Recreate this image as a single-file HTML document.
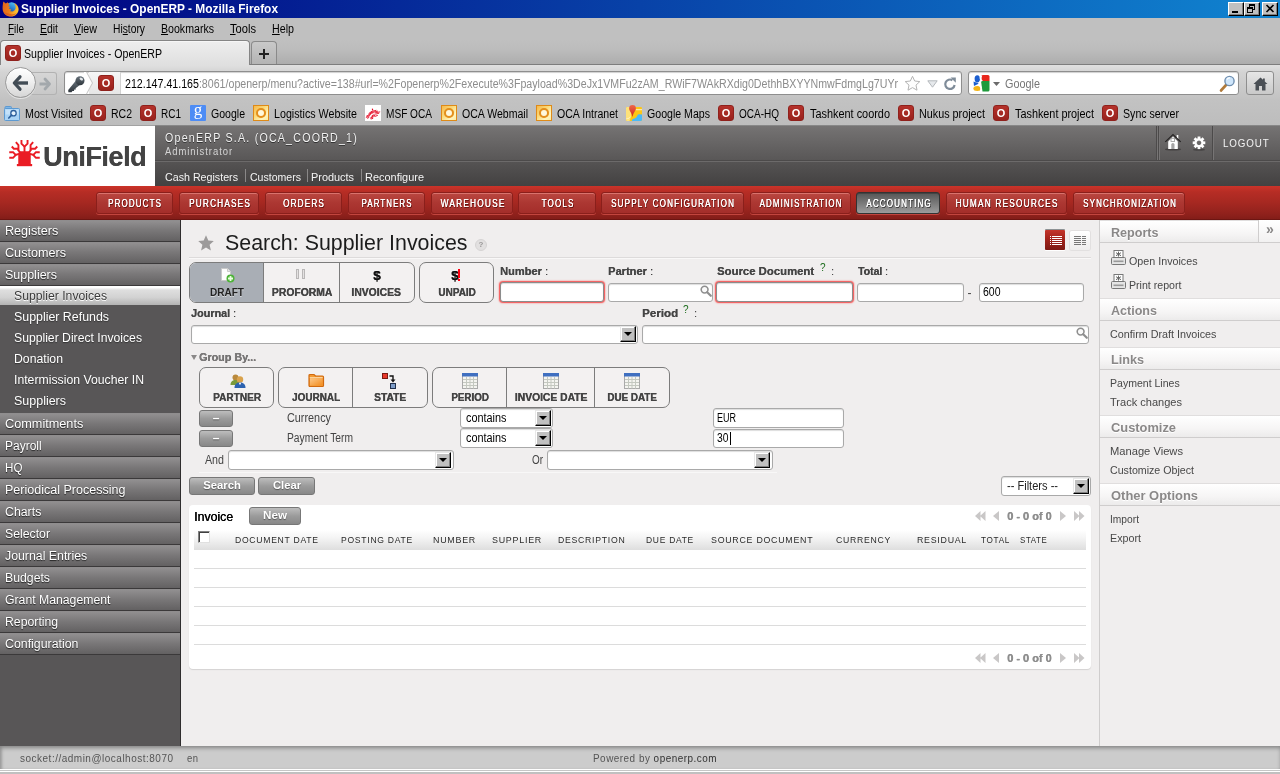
<!DOCTYPE html>
<html><head>
<meta charset="utf-8">
<title>Supplier Invoices - OpenERP</title>
<style>
html,body{margin:0;padding:0;}
body{will-change:transform;width:1280px;height:774px;overflow:hidden;position:relative;background:#c0c0c0;font-family:"Liberation Sans",sans-serif;font-size:12px;color:#000;}
body *{position:absolute;}
u,.s,style,head,title,script{position:static;}
div,span,a,i,b{box-sizing:border-box;white-space:nowrap;}
svg{display:block;overflow:visible;}
/* ---------- browser chrome ---------- */
#titlebar{left:0;top:0;width:1280px;height:18px;background:linear-gradient(to right,#000080 0%,#1084d0 100%);}
#titlebar .t{left:21px;top:2px;color:#fff;font-weight:bold;font-size:12.5px;line-height:15px;}
.wb{top:2px;width:16px;height:14px;background:#c0c0c0;border:1px solid;border-color:#fff #000 #000 #fff;box-shadow:inset -1px -1px 0 #808080;}
#menubar{left:0;top:18px;width:1280px;height:22px;background:#c0c0c0;}
#menubar span{top:4px;font-size:12px;line-height:14px;color:#000;}
#tabbar{left:0;top:40px;width:1280px;height:25px;background:linear-gradient(#c0c0c0 0,#bcbcbc 40%,#adadad 100%);border-bottom:1px solid #7d7d7d;}
#tab{left:0;top:0;width:250px;height:25px;background:linear-gradient(#eeeeee,#dfdfdf);border:1px solid #858585;border-bottom:none;border-radius:4px 4px 0 0;box-shadow:inset 0 1px 0 #f6f6f6;}
#newtab{left:251px;top:1px;width:26px;height:23px;background:linear-gradient(#c9c9c9,#b4b4b4);border:1px solid #8a8a8a;border-bottom:none;border-radius:4px 4px 0 0;}
#navbar{left:0;top:65px;width:1280px;height:35px;background:linear-gradient(#e0e0e0 0,#d4d4d4 20%,#c2c2c2 100%);}
.fav{width:16px;height:16px;border-radius:3px;background:linear-gradient(#b5322b,#98221d);border:1px solid #8f211c;}
.fav b{left:0;top:0;width:14px;height:14px;line-height:14px;text-align:center;color:#fff;font-size:11px;font-weight:bold;}
.olk{width:16px;height:16px;background:linear-gradient(135deg,#f6b84a 0,#fbd978 40%,#fff6c0 75%,#fdeaa0 100%);border:1px solid #de8a18;}
.olk b{left:1.500px;top:1.500px;width:10px;height:10px;border:2.500px solid #e38f1c;border-radius:50%;background:#fff8dc;box-shadow:0 0 1px #f8c66a;}
#urlbar{left:64px;top:71px;width:898px;height:24px;background:#fff;border:1px solid #8e8e8e;border-radius:3px;box-shadow:inset 0 1px 1px #d0d0d0;}
#searchbar{left:968px;top:71px;width:271px;height:24px;background:#fff;border:1px solid #8e8e8e;border-radius:3px;box-shadow:inset 0 1px 1px #d0d0d0;}
#homebtn{left:1246px;top:71px;width:28px;height:24px;background:linear-gradient(#e6e6e6,#c9c9c9);border:1px solid #8e8e8e;border-radius:3px;}
#bmbar{left:0;top:100px;width:1280px;height:25px;background:linear-gradient(#c2c2c2,#bdbdbd);}
#bmbar .bt{top:7px;font-size:12px;line-height:14px;color:#000;}
#bmbar .fav,#bmbar .olk,#bmbar .ic{top:5px;}
/* ---------- page ---------- */
#page{left:0;top:126px;width:1280px;height:646px;background:#f0eeee;overflow:hidden;}
#logo{left:0;top:0;width:155px;height:60px;background:#fff;}
#hdr{left:155px;top:0;width:1125px;height:60px;background:#4a4848;}
#hdr .up{left:0;top:0;width:1125px;height:35px;background:linear-gradient(#757373,#595757);border-bottom:1px solid #4c4a4a;}
#hdr .lo{left:0;top:35px;width:1125px;height:25px;background:linear-gradient(#555353,#434141);border-top:1px solid #6c6a6a;}
#hdr .co{left:10px;top:5px;font-size:12px;line-height:14px;color:#f2f2f2;letter-spacing:1.400px;text-shadow:0 1px 0 #333;}
#hdr .us{left:10px;top:20px;font-size:10px;line-height:12px;color:#d4d4d4;letter-spacing:1px;}
#hdr .sc{top:43.500px;font-size:11.500px;line-height:14px;color:#f4f4f4;}
#hdr .sp{top:43px;width:1px;height:13px;background:#8a8888;}
#hdr .vs{top:0;width:2px;height:34px;border-left:1px solid #4c4a4a;border-right:1px solid #777575;}
#red{left:0;top:60px;width:1280px;height:34px;background:linear-gradient(#cb3329 0,#b62d25 18%,#a62821 50%,#90211c 85%,#831d18 100%);border-bottom:1px solid #6d1512;}
.mb{top:6px;height:22px;border:1px solid #8a1f1b;border-radius:3px;background:linear-gradient(#bb4741,#ac3732 50%,#a42e2a);box-shadow:inset 0 1px 0 #d9736d,0 1px 0 #c2453e;color:#fff;font-size:10px;line-height:22px;letter-spacing:1.400px;text-shadow:.2px 0 0 #fff,1px 1px 0 #5a100d;text-align:center;}
.mb span{position:relative;margin-left:.6px;top:0;}
.mb.act{background:linear-gradient(#565656,#9c9c9c);border-color:#333;box-shadow:inset 0 1px 0 #444,0 1px 0 #c2453e;text-shadow:.2px 0 0 #fff,1px 1px 0 #333;}
#side{left:0;top:94px;width:180px;height:526px;background:#585657;}
#sidebr{left:180px;top:94px;width:1px;height:526px;background:#2f2d2e;}
.acc{left:0;width:180px;height:22px;background:linear-gradient(#918f90 0,#7a7879 45%,#636162 100%);border-top:1px solid #8f8d8e;border-bottom:1px solid #3b393a;color:#fff;font-size:12.500px;line-height:20px;text-shadow:0 1px 1px #222;}
.acc span{left:5px;top:0;}
.sub{left:14.400px;font-size:12px;line-height:16px;color:#fff;text-shadow:0 1px 1px #333;}
#subsel{left:0;top:66px;width:180px;height:19px;background:linear-gradient(#fff 0,#fff 8%,#dedede 22%,#d2d2d2 60%,#b3b3b3 100%);}
#main{left:181px;top:94px;width:918px;height:526px;background:#f0eeee;}
#rside{left:1099px;top:94px;width:181px;height:526px;background:#f0eeee;border-left:1px solid #cfcdcd;}
.sh{left:0;width:180px;height:23px;background:linear-gradient(#fff,#f6f5f5 60%,#ecebeb);border-top:1px solid #e0dede;border-bottom:1px solid #cfcdcd;}
.sh span{left:10.500px;top:3.500px;font-size:13px;line-height:16px;font-weight:bold;color:#8a8888;text-shadow:0 1px 0 #fff;}
.sl{left:9.500px;font-size:11.500px;line-height:14px;color:#484848;}
#foot{left:0;top:620px;width:1280px;height:23px;background:#cccccc;box-shadow:inset 0 3px 4px -1px #858585,inset 3px 0 3px -1px #a5a5a5;font-size:10px;color:#555;}
#foot span{top:7px;line-height:12px;letter-spacing:.5px;}
/* main content */
h1{margin:0;font-weight:normal;}
.lbl{font-size:11.500px;line-height:13px;font-weight:bold;color:#444;text-shadow:.3px 0 0 #555;}
.lbl i{font-style:normal;font-weight:normal;position:static;}
.inp{background:#fff;border:1px solid #a9a9a9;border-radius:3px;box-shadow:inset 0 1px 1px #ddd;}
.inp.red{border-color:#8c8c8c;box-shadow:0 0 1.500px 1px #f64545, inset 0 1px 1px #ddd;}
.inp span{left:4px;top:3px;font-size:12px;line-height:14px;color:#000;}
.dd{width:16px;height:16px;background:#c0c0c0;border:1px solid;border-color:#e8e8e8 #000 #000 #e8e8e8;box-shadow:inset -1px -1px 0 #808080,inset 1px 1px 0 #fff;}
.dd:after{content:"";position:absolute;left:3px;top:5px;border:4px solid transparent;border-top:4px solid #000;border-bottom:none;}
.fg{top:137px;height:41px;border:1px solid #7c7c7c;border-radius:7px;background:#f3f1f1;overflow:hidden;}
.fg .c{top:0;height:39px;}
.fg .c.sel{background:#a9aeb5;}
.fg .c+.c{border-left:1px solid #7c7c7c;}
.fl{top:23px;left:0;width:100%;text-align:center;font-size:11px;line-height:12px;font-weight:bold;color:#444;text-shadow:.35px 0 0 #444;}
.fl span{position:relative;}
.gbtn{background:linear-gradient(#bdbdbd,#9b9b9b 50%,#888);border:1px solid #777;border-radius:3px;color:#fff;font-weight:bold;font-size:12px;text-align:center;text-shadow:0 1px 1px #555;}
.gbtn span{position:relative;}
#list{left:8px;top:285px;width:902px;height:164px;background:#fff;border-radius:4px;box-shadow:0 1px 1px #d4d2d2;}
#lhead{left:5px;top:25px;width:892px;height:20px;background:linear-gradient(#fff 0,#f4f4f4 40%,#dedede 100%);}
#lhead span{top:4px;font-size:9.500px;line-height:11px;letter-spacing:.800px;color:#2a2a2a;}
.row{left:5px;width:892px;height:1px;background:#dcdcdc;}
.pg{font-size:11px;font-weight:bold;color:#8e8e8e;line-height:12px;text-shadow:.4px 0 0 #8e8e8e;}
</style>
</head>
<body class="abs">
<div id="titlebar" class="abs">
<svg style="left:2px;top:1px" width="17" height="16" viewBox="0 0 17 16"><defs><linearGradient id="fg1" x1="0" y1="0" x2="1" y2=".3"><stop offset="0" stop-color="#e0601a"></stop><stop offset=".55" stop-color="#ec7c1c"></stop><stop offset="1" stop-color="#fbc432"></stop></linearGradient><linearGradient id="fg2" x1=".7" y1="0" x2=".2" y2="1"><stop offset="0" stop-color="#56c4f2"></stop><stop offset=".5" stop-color="#2a7fd0"></stop><stop offset="1" stop-color="#153e96"></stop></linearGradient></defs><circle cx="9.500" cy="6.800" r="5.600" fill="url(#fg2)"></circle><path d="M1.300.600L3.800 2.600 5.800 1.200 7.200 3.400 6.300 5.200 8.200 5.800 6.800 7.600 9.200 8.600 8.200 10.200 10.800 10.400C12.500 10 14 8 13.600 5.500 13.400 4 12.800 3 12 2.200 14.800 2.800 16.800 5.500 16.600 8.500 16.400 12.500 13 15.600 9 15.600 4.500 15.600.800 12.500.600 8 .500 5 1 2.500 1.300.600Z" fill="url(#fg1)"></path><path d="M1.500 10.500C3 13.500 6 15 9 15 11.500 15 13.800 13.800 15.200 11.500 13.500 13 11 13.600 8.500 13 5.500 12.600 3 11.800 1.500 10.500Z" fill="#d9521a" opacity=".7"></path></svg>
<span class="t" style="display: inline-block; transform: scale(0.952, 1); transform-origin: 0px 50%;">Supplier Invoices - OpenERP - Mozilla Firefox</span>
<div class="wb abs" style="left:1228px"><i style="left:3px;top:8px;width:6px;height:2px;background:#000"></i></div>
<div class="wb abs" style="left:1244px"><i style="left:4px;top:1px;width:6px;height:6px;border:1px solid #000;border-top-width:2px"></i><i style="left:2px;top:4px;width:6px;height:6px;border:1px solid #000;border-top-width:2px;background:#c0c0c0"></i></div>
<div class="wb abs" style="left:1262px"><svg style="left:3px;top:2px" width="8" height="7" viewBox="0 0 8 7"><path d="M0.5 0L7.5 7M7.5 0L0.5 7" stroke="#000" stroke-width="1.6" fill="none"></path></svg></div>
</div>
<div id="menubar" class="abs">
<span style="left: 8px; display: inline-block; transform: scale(0.8265, 1); transform-origin: 0px 50%;"><u>F</u>ile</span>
<span style="left: 40px; display: inline-block; transform: scale(0.8694, 1); transform-origin: 0px 50%;"><u>E</u>dit</span>
<span style="left: 74px; display: inline-block; transform: scale(0.891, 1); transform-origin: 0px 50%;"><u>V</u>iew</span>
<span style="left: 113px; display: inline-block; transform: scale(0.8565, 1); transform-origin: 0px 50%;">Hi<u>s</u>tory</span>
<span style="left: 161px; display: inline-block; transform: scale(0.8829, 1); transform-origin: 0px 50%;"><u>B</u>ookmarks</span>
<span style="left: 230px; display: inline-block; transform: scale(0.9281, 1); transform-origin: 0px 50%;"><u>T</u>ools</span>
<span style="left: 272px; display: inline-block; transform: scale(0.8911, 1); transform-origin: 0px 50%;"><u>H</u>elp</span>
</div>
<div id="tabbar" class="abs">
<div id="tab" class="abs"><div class="fav abs" style="left:4px;top:4px"><b>O</b></div><span style="left: 23px; top: 6px; font-size: 12px; line-height: 14px; display: inline-block; transform: scale(0.8842, 1); transform-origin: 0px 50%;">Supplier Invoices - OpenERP</span></div>
<div id="newtab" class="abs"><i style="left:7px;top:11px;width:10px;height:2px;background:#222"></i><i style="left:11px;top:7px;width:2px;height:10px;background:#222"></i></div>
</div>
<div id="navbar" class="abs"></div>
<div id="fwdbtn" style="left:30px;top:71.500px;width:27px;height:23px;border:1px solid #b2b2b2;border-left:none;border-radius:0 3px 3px 0;background:linear-gradient(#d6d6d6,#c8c8c8)"><svg style="left:8px;top:4px" width="14" height="14" viewBox="0 0 14 14"><path d="M7 2L11.500 7 7 12" fill="none" stroke="#a3a8ac" stroke-width="2.800" stroke-linecap="round" stroke-linejoin="round"></path><path d="M1.500 7H10.500" stroke="#a3a8ac" stroke-width="3" stroke-linecap="butt"></path></svg></div>
<div id="backbtn" style="left:4.500px;top:67px;width:31px;height:31px;border-radius:50%;border:1px solid #9a9a9a;background:linear-gradient(#ffffff,#f0f0f0 45%,#d6d6d6);box-shadow:0 1px 0 #e4e4e4"><svg style="left:6px;top:7px" width="17" height="16" viewBox="0 0 17 16"><path d="M8 1.800L2.300 8 8 14.200" fill="none" stroke="#424c55" stroke-width="3.200" stroke-linecap="round" stroke-linejoin="round"></path><path d="M3 8H16" stroke="#424c55" stroke-width="3.400" stroke-linecap="butt"></path></svg></div>
<div id="urlbar">
<div style="left:24px;top:0;width:32px;height:22px;background:linear-gradient(#f6f6f6,#e6e6e6);border-right:1px solid #d2d2d2"></div>
<svg style="left:19px;top:0" width="10" height="22" viewBox="0 0 10 21" preserveAspectRatio="none"><path d="M0 0H2.500L8.500 10.500 2.500 21H0z" fill="#fff"></path><path d="M2.500 0L8.500 10.500 2.500 21" fill="none" stroke="#c9c9c9" stroke-width="1"></path></svg>
<svg style="left:2px;top:3px" width="18" height="18" viewBox="0 0 18 18"><defs><linearGradient id="kg" x1="0" y1="0" x2="0" y2="1"><stop offset="0" stop-color="#66717a"></stop><stop offset="1" stop-color="#2f363c"></stop></linearGradient></defs><path d="M9 5.500L13.200 9.800 8.600 13.200 8.800 14.600 7.200 14.600 7 16 5.400 15.900 4.600 17.200 1.400 17.200 1.200 15Z" fill="url(#kg)"></path><circle cx="13" cy="5.800" r="4.500" fill="url(#kg)"></circle><ellipse cx="14.300" cy="4" rx="1.900" ry="1.300" transform="rotate(35 14.300 4)" fill="#e4e8eb"></ellipse></svg>
<div class="fav" style="left:33px;top:3px;width:16px;height:16px"><b>O</b></div>
<span style="left: 60px; top: 5px; font-size: 12px; line-height: 14px; display: inline-block; transform: scale(0.886, 1); transform-origin: 0px 50%;">212.147.41.165<span style="color:#8c8c8c;position:static">:8061/openerp/menu?active=138#url=%2Fopenerp%2Fexecute%3Fpayload%3DeJx1VMFu2zAM_RWiF7WAkRXdig0DethhBXYYNmwFdmgLg7UYr</span></span>
<svg style="left:839px;top:3px" width="17" height="17" viewBox="0 0 17 17"><path d="M8.5 1.3l2.2 4.700 5.100.6-3.800 3.500 1 5.100-4.500-2.600-4.500 2.600 1-5.100-3.800-3.500 5.100-.6z" fill="#fdfdfd" stroke="#b4b4b4" stroke-width="1" stroke-linejoin="round"></path></svg>
<svg style="left:862px;top:8px" width="11" height="8" viewBox="0 0 11 8"><path d="M0.800.8h9.400L5.500 7.200z" fill="#e6e9ec" stroke="#b4b8bc" stroke-width="1"></path></svg>
<svg style="left:879px;top:5px" width="13" height="14" viewBox="0 0 13 14"><path d="M10.600 8A4.700 4.700 0 1 1 8.400 3.200" fill="none" stroke="#7f8c99" stroke-width="2.200"></path><path d="M6.600 .600h5.200v5.200z" fill="#7f8c99"></path></svg>
</div>
<div id="searchbar" class="abs">
<svg style="left:4px;top:3px" width="17" height="17" viewBox="0 0 17 17"><path d="M8.500 0H15a1.500 1.500 0 0 1 1.500 1.500V6H8.500z" fill="#e8261c"></path><path d="M8 6h8.500v9a1.500 1.500 0 0 1-1.500 1.500H9.500z" fill="#1f9a3c"></path><ellipse cx="4.300" cy="3.800" rx="2.700" ry="3.600" fill="#1c5fd0"></ellipse><path d="M0.500 6.500L6 8.500 1 11z" fill="#1c5fd0"></path><ellipse cx="4.300" cy="13.600" rx="3.900" ry="2.500" fill="#f5b516"></ellipse><path d="M7.300 0.500h2.200c-1.800 1.800-1.600 4 .4 5.300-2.400.8-3.400 2.400-2.300 4.400 1 1.600 1.500 3.400.6 6.300l-1.400-.4c.8-2 .4-3.600-.6-5-1.400-2-.4-4.500 1.600-5.500-1.400-1.300-1.600-3.500-.5-5.100z" fill="#fff"></path></svg>
<svg style="left:24px;top:10px" width="7" height="4" viewBox="0 0 7 4"><path d="M0 0h7L3.500 4z" fill="#6b6b6b"></path></svg>
<span style="left: 36px; top: 5px; font-size: 12px; line-height: 14px; color: rgb(119, 119, 119); display: inline-block; transform: scale(0.9043, 1); transform-origin: 0px 50%;">Google</span>
<svg style="left:250px;top:3px" width="17" height="17" viewBox="0 0 17 17"><path d="M2 15.500L7.500 9.500" stroke="#b07a3a" stroke-width="2.600" stroke-linecap="round"></path><circle cx="10.500" cy="6" r="4.600" fill="#cfe6fb" stroke="#6f8fb0" stroke-width="1.400"></circle><path d="M8 4.500a3 3 0 0 1 3-1.500" stroke="#fff" stroke-width="1.200" fill="none"></path></svg>
</div>
<div id="homebtn" class="abs"><svg style="left:6px;top:5px" width="15" height="14" viewBox="0 0 15 14"><path d="M7.500 0.500L0.500 7h2v6.500h3.500V9h3v4.500h3.500V7h2L11.800 4.500V1.500h-1.800v1.300z" fill="#4a4f55"></path></svg></div>
<div id="bmbar" class="abs">
<svg class="ic" style="left:4px" width="16" height="16" viewBox="0 0 16 16"><path d="M1 4V2.500A1 1 0 0 1 2 1.500H6.500A1 1 0 0 1 7.500 2.500V4z" fill="#7fb6e6" stroke="#5d9ad2" stroke-width="1"></path><rect x=".500" y="3.500" width="15" height="12" rx="1" fill="#a9d3f5" stroke="#5d9ad2" stroke-width="1"></rect><rect x="1.500" y="4.500" width="13" height="5" fill="#c4e2fa"></rect><circle cx="9.500" cy="8.200" r="2.700" fill="#e6f3fd" stroke="#2c5f9c" stroke-width="1.300"></circle><path d="M7.600 10.200L4.800 13" stroke="#2c5f9c" stroke-width="1.700" stroke-linecap="round"></path></svg>
<span class="bt" style="left: 25px; display: inline-block; transform: scale(0.8904, 1); transform-origin: 0px 50%;">Most Visited</span>
<div class="fav abs" style="left:90px"><b>O</b></div><span class="bt" style="left: 111px; display: inline-block; transform: scale(0.8744, 1); transform-origin: 0px 50%;">RC2</span>
<div class="fav abs" style="left:140px"><b>O</b></div><span class="bt" style="left: 161px; display: inline-block; transform: scale(0.8328, 1); transform-origin: 0px 50%;">RC1</span>
<div class="ic abs" style="left:190px;width:16px;height:16px;background:#4d8cf5;border-radius:1px"><b style="left:0;top:-3px;width:16px;text-align:center;color:#fff;font-family:'Liberation Serif',serif;font-size:17px;line-height:16px;font-weight:normal">g</b></div><span class="bt" style="left: 211px; display: inline-block; transform: scale(0.8785, 1); transform-origin: 0px 50%;">Google</span>
<div class="olk abs" style="left:253px"><b></b></div><span class="bt" style="left: 274px; display: inline-block; transform: scale(0.891, 1); transform-origin: 0px 50%;">Logistics Website</span>
<div class="ic abs" style="left:365px;width:16px;height:16px;background:#fff"><svg style="left:0;top:0" width="16" height="16" viewBox="0 0 16 16"><g stroke="#e3001b" stroke-linecap="round" fill="none" transform="translate(0 1.200) scale(1 .880)"><path d="M7.400 3.200L7.700 4.400" stroke-width="1.200"></path><path d="M6 6.200L11 4.700M4.600 7.500L12.600 5.700M10 7.600L14.800 6.500M10.600 9L13.800 8.100M3.600 8.900L8.200 7.500" stroke-width=".900"></path><path d="M1.600 11.200L5.800 9M1.200 12.700L4.800 10.700M7.200 10.600L9.200 9.700M6.600 12.100L9.600 10.600M9.800 11.600L12.400 10.600M5.400 13.500L8 12.400M2.400 13.600L3.800 12.900M6.200 14.500L7.800 13.900" stroke-width=".950"></path></g></svg></div><span class="bt" style="left: 386px; display: inline-block; transform: scale(0.8414, 1); transform-origin: 0px 50%;">MSF OCA</span>
<div class="olk abs" style="left:441px"><b></b></div><span class="bt" style="left: 462px; display: inline-block; transform: scale(0.8784, 1); transform-origin: 0px 50%;">OCA Webmail</span>
<div class="olk abs" style="left:536px"><b></b></div><span class="bt" style="left: 557px; display: inline-block; transform: scale(0.8793, 1); transform-origin: 0px 50%;">OCA Intranet</span>
<svg class="ic" style="left:626px" width="16" height="16" viewBox="0 0 16 16"><defs><linearGradient id="gm1" x1="0" y1="0" x2="0" y2="1"><stop offset="0" stop-color="#f0674a"></stop><stop offset="1" stop-color="#cf2a1c"></stop></linearGradient></defs><rect x="0" y="2" width="16" height="14" rx="1.200" fill="#fdc614"></rect><path d="M0 3.200A1.200 1.200 0 0 1 1.200 2H4.500Q6.500 9 3.500 16H1.200A1.200 1.200 0 0 1 0 14.800z" fill="#fde27a"></path><path d="M6 16C5.600 13.600 8 13.900 9.500 13 11.500 12 10.800 9.600 13 9.200L16 9.400V14.800A1.200 1.200 0 0 1 14.800 16z" fill="#4bbaf5"></path><rect x="9.500" y="4.200" width="6.500" height="1" fill="#fff3c8"></rect><path d="M.500 13.500Q3.500 14 4.600 11.500" stroke="#fff3c8" stroke-width=".8" fill="none"></path><path d="M6.500 0A3.400 3.400 0 0 1 9.900 3.400C9.900 5.600 7.200 7.500 6.700 11.600H6.300C5.800 7.500 3.100 5.600 3.100 3.400A3.400 3.400 0 0 1 6.500 0z" fill="url(#gm1)"></path></svg>
<span class="bt" style="left: 647px; display: inline-block; transform: scale(0.8827, 1); transform-origin: 0px 50%;">Google Maps</span>
<div class="fav abs" style="left:718px"><b>O</b></div><span class="bt" style="left: 739px; display: inline-block; transform: scale(0.8333, 1); transform-origin: 0px 50%;">OCA-HQ</span>
<div class="fav abs" style="left:788px"><b>O</b></div><span class="bt" style="left: 810px; display: inline-block; transform: scale(0.9084, 1); transform-origin: 0px 50%;">Tashkent coordo</span>
<div class="fav abs" style="left:898px"><b>O</b></div><span class="bt" style="left: 919px; display: inline-block; transform: scale(0.8995, 1); transform-origin: 0px 50%;">Nukus project</span>
<div class="fav abs" style="left:993px"><b>O</b></div><span class="bt" style="left: 1015px; display: inline-block; transform: scale(0.904, 1); transform-origin: 0px 50%;">Tashkent project</span>
<div class="fav abs" style="left:1102px"><b>O</b></div><span class="bt" style="left: 1123px; display: inline-block; transform: scale(0.8838, 1); transform-origin: 0px 50%;">Sync server</span>
</div>
<div style="left:0;top:125px;width:1280px;height:1px;background:linear-gradient(to right,#a2a2a2 155px,#878787 155px)"></div>
<div id="page" class="abs">
<div id="logo" class="abs">
<svg style="left:8px;top:13px" width="33" height="28" viewBox="0 0 32.5 28"><g fill="none" stroke="#ea1c24" stroke-width="1.900" stroke-linecap="butt" stroke-linejoin="miter"><path d="M12.2 13.8 L9.4 10.4"></path><path d="M10.2 11 V6 L7.6 3.2"></path><path d="M10.2 9.7 H5.6 L3.5 7.5"></path><path d="M10.8 14.8 L7 16"></path><path d="M7.6 16.2 L4.8 13.2 H1"></path><path d="M7.6 15.8 L4.8 18.8 H1"></path><path d="M16.25 7.6 L13.2 4.6 V1"></path><path d="M 20.3 13.8 L 23.1 10.4"></path><path d="M 22.3 11 V 6 L 24.9 3.2"></path><path d="M 22.3 9.7 H 26.9 L 29 7.5"></path><path d="M 21.7 14.8 L 25.5 16"></path><path d="M 24.9 16.2 L 27.7 13.2 H 31.5"></path><path d="M 24.9 15.8 L 27.7 18.8 H 31.5"></path><path d="M 16.25 7.6 L 19.3 4.6 V 1"></path><path d="M16.25 13 V7"></path></g><path d="M10 25.500V15.500Q10 12.400 13 12.300H19.500Q22.500 12.400 22.500 15.500V25.500Z" fill="#ea1c24"></path><path d="M8.600 25h15.300v2.200H8.600z" fill="#ea1c24"></path></svg>
<span style="left: 43px; top: 18px; font-size: 27px; line-height: 27px; font-weight: bold; color: rgb(67, 67, 67); letter-spacing: -0.5px; text-shadow: rgb(67, 67, 67) 0.3px 0px 0px; display: inline-block; transform: scale(1.0049, 1); transform-origin: 0px 50%;">UniField</span>
</div>
<div id="hdr" class="abs">
<div class="up"></div><div class="lo"></div>
<span class="co" style="display: inline-block; transform: scale(0.8843, 1); transform-origin: 0px 50%;">OpenERP S.A. (OCA_COORD_1)</span>
<span class="us" style="display: inline-block; transform: scale(0.9457, 1); transform-origin: 0px 50%;">Administrator</span>
<span class="sc" style="left: 10px; display: inline-block; transform: scale(0.9285, 1); transform-origin: 0px 50%;">Cash Registers</span><i class="sp" style="left:90px"></i>
<span class="sc" style="left: 95px; display: inline-block; transform: scale(0.9171, 1); transform-origin: 0px 50%;">Customers</span><i class="sp" style="left:152px"></i>
<span class="sc" style="left: 156px; display: inline-block; transform: scale(0.9473, 1); transform-origin: 0px 50%;">Products</span><i class="sp" style="left:206px"></i>
<span class="sc" style="left: 210px; display: inline-block; transform: scale(0.9514, 1); transform-origin: 0px 50%;">Reconfigure</span>
<i class="vs" style="left:1001px"></i><i class="vs" style="left:1003px"></i><i class="vs" style="left:1057px"></i>
<svg style="left:1009px;top:7px" width="18" height="18" viewBox="0 0 18 18"><ellipse cx="9" cy="16.400" rx="8" ry="1.100" fill="#2e2c2c" opacity=".6"></ellipse><path d="M4.200 8.500L9 3.400 13.800 8.500V16H4.200Z" fill="#fff"></path><rect x="12.700" y="2" width="1.600" height="4" fill="#fff"></rect><path d="M1.300 8.900L9 1.500 16.700 8.900" fill="none" stroke="#262424" stroke-width="1.250"></path><rect x="7" y="5.300" width="3.600" height="3.200" fill="#fff" stroke="#999" stroke-width=".8"></rect><path d="M7.300 16V11.500a1.600 1.600 0 0 1 3.200 0V16z" fill="#a5a5a5"></path></svg>
<svg style="left:1037px;top:10px" width="14" height="15" viewBox="0 0 14 15"><ellipse cx="7" cy="13.800" rx="6" ry="1" fill="#2e2c2c" opacity=".5"></ellipse><g transform="translate(7 6.800)"><g fill="#fff"><rect x="-1.400" y="-6.300" width="2.800" height="12.600"></rect><rect x="-1.400" y="-6.300" width="2.800" height="12.600" transform="rotate(45)"></rect><rect x="-1.400" y="-6.300" width="2.800" height="12.600" transform="rotate(90)"></rect><rect x="-1.400" y="-6.300" width="2.800" height="12.600" transform="rotate(135)"></rect><circle r="4.500"></circle></g><circle r="1.900" fill="#6a6868" stroke="#4a4848" stroke-width=".6"></circle></g></svg>
<span style="left: 1068px; top: 10px; font-size: 11.5px; line-height: 14px; color: rgb(244, 244, 244); letter-spacing: 1px; display: inline-block; transform: scale(0.8522, 1); transform-origin: 0px 50%;">LOGOUT</span>
</div>
<div id="red" class="abs">
<div class="mb" style="left:96px;width:77px"><span style="display: inline-block; transform: translateX(-50%) scale(0.802, 1); position: absolute; left: 50%; transform-origin: 50% 50%;">PRODUCTS</span></div>
<div class="mb" style="left:179px;width:80px"><span style="display: inline-block; transform: translateX(-50%) scale(0.8284, 1); position: absolute; left: 50%; transform-origin: 50% 50%;">PURCHASES</span></div>
<div class="mb" style="left:265px;width:77px"><span style="display: inline-block; transform: translateX(-50%) scale(0.8205, 1); position: absolute; left: 50%; transform-origin: 50% 50%;">ORDERS</span></div>
<div class="mb" style="left:348px;width:77px"><span style="display: inline-block; transform: translateX(-50%) scale(0.7878, 1); position: absolute; left: 50%; transform-origin: 50% 50%;">PARTNERS</span></div>
<div class="mb" style="left:431px;width:82px"><span style="display: inline-block; transform: translateX(-50%) scale(0.8355, 1); position: absolute; left: 50%; transform-origin: 50% 50%;">WAREHOUSE</span></div>
<div class="mb" style="left:518px;width:78px"><span style="display: inline-block; transform: translateX(-50%) scale(0.8104, 1); position: absolute; left: 50%; transform-origin: 50% 50%;">TOOLS</span></div>
<div class="mb" style="left:601px;width:143px"><span style="display: inline-block; transform: translateX(-50%) scale(0.8133, 1); position: absolute; left: 50%; transform-origin: 50% 50%;">SUPPLY CONFIGURATION</span></div>
<div class="mb" style="left:750px;width:101px"><span style="display: inline-block; transform: translateX(-50%) scale(0.7949, 1); position: absolute; left: 50%; transform-origin: 50% 50%;">ADMINISTRATION</span></div>
<div class="mb act" style="left:856px;width:84px"><span style="display: inline-block; transform: translateX(-50%) scale(0.8063, 1); position: absolute; left: 50%; transform-origin: 50% 50%;">ACCOUNTING</span></div>
<div class="mb" style="left:946px;width:121px"><span style="display: inline-block; transform: translateX(-50%) scale(0.832, 1); position: absolute; left: 50%; transform-origin: 50% 50%;">HUMAN RESOURCES</span></div>
<div class="mb" style="left:1073px;width:112px"><span style="display: inline-block; transform: translateX(-50%) scale(0.8038, 1); position: absolute; left: 50%; transform-origin: 50% 50%;">SYNCHRONIZATION</span></div>
</div>
<div id="side" class="abs">
<div class="acc" style="top:0"><span style="display: inline-block; transform: scale(1.0076, 1); transform-origin: 0px 50%;">Registers</span></div>
<div class="acc" style="top:22px"><span style="display: inline-block; transform: scale(1.0093, 1); transform-origin: 0px 50%;">Customers</span></div>
<div class="acc" style="top:44px"><span style="display: inline-block; transform: scale(0.9976, 1); transform-origin: 0px 50%;">Suppliers</span></div>
<div id="subsel"></div>
<span class="sub" style="top: 68px; color: rgb(58, 58, 58); text-shadow: rgb(255, 255, 255) 0px 1px 0px; display: inline-block; transform: scale(1.0176, 1); transform-origin: 0px 50%;">Supplier Invoices</span>
<span class="sub" style="top: 89px; display: inline-block; transform: scale(1.0319, 1); transform-origin: 0px 50%;">Supplier Refunds</span>
<span class="sub" style="top: 110px; display: inline-block; transform: scale(1.0154, 1); transform-origin: 0px 50%;">Supplier Direct Invoices</span>
<span class="sub" style="top: 131px; display: inline-block; transform: scale(1.0198, 1); transform-origin: 0px 50%;">Donation</span>
<span class="sub" style="top: 152px; display: inline-block; transform: scale(1.0205, 1); transform-origin: 0px 50%;">Intermission Voucher IN</span>
<span class="sub" style="top: 173px; display: inline-block; transform: scale(1.0394, 1); transform-origin: 0px 50%;">Suppliers</span>
<div class="acc" style="top:193px"><span style="display: inline-block; transform: scale(1.0156, 1); transform-origin: 0px 50%;">Commitments</span></div>
<div class="acc" style="top:215px"><span style="display: inline-block; transform: scale(0.9603, 1); transform-origin: 0px 50%;">Payroll</span></div>
<div class="acc" style="top:237px"><span style="display: inline-block; transform: scale(0.928, 1); transform-origin: 0px 50%;">HQ</span></div>
<div class="acc" style="top:259px"><span style="display: inline-block; transform: scale(1.0016, 1); transform-origin: 0px 50%;">Periodical Processing</span></div>
<div class="acc" style="top:281px"><span style="display: inline-block; transform: scale(0.9857, 1); transform-origin: 0px 50%;">Charts</span></div>
<div class="acc" style="top:303px"><span style="display: inline-block; transform: scale(0.9813, 1); transform-origin: 0px 50%;">Selector</span></div>
<div class="acc" style="top:325px"><span style="display: inline-block; transform: scale(0.9859, 1); transform-origin: 0px 50%;">Journal Entries</span></div>
<div class="acc" style="top:347px"><span style="display: inline-block; transform: scale(0.9809, 1); transform-origin: 0px 50%;">Budgets</span></div>
<div class="acc" style="top:369px"><span style="display: inline-block; transform: scale(0.9786, 1); transform-origin: 0px 50%;">Grant Management</span></div>
<div class="acc" style="top:391px"><span style="display: inline-block; transform: scale(0.9815, 1); transform-origin: 0px 50%;">Reporting</span></div>
<div class="acc" style="top:413px"><span style="display: inline-block; transform: scale(0.9884, 1); transform-origin: 0px 50%;">Configuration</span></div>
</div>
<div id="sidebr"></div>
<div id="main" class="abs">
<svg style="left:17px;top:15px" width="16" height="16" viewBox="0 0 16 16"><path d="M8 0.300l2.300 5.300 5.500.5-4.200 3.700 1.300 5.600L8 12.400 3.100 15.400l1.300-5.600L.2 6.100l5.500-.5z" fill="#9c9a9a"></path></svg>
<h1 style="left: 44px; top: 11px; font-size: 22px; line-height: 24px; color: rgb(28, 28, 28); display: inline-block; transform: scale(0.9721, 1); transform-origin: 0px 50%;">Search: Supplier Invoices</h1>
<div style="left:294px;top:19px;width:12px;height:12px;border-radius:50%;background:#e2e0e0;border:1px solid #d6d4d4"><span style="left:2.500px;top:0;font-size:8px;line-height:10px;font-weight:bold;color:#9a9898">?</span></div>
<div style="left:864px;top:10px;width:20px;height:20px;border-radius:1px;background:linear-gradient(#c4352a,#a3231b 45%,#7c1913);box-shadow:0 -1px 0 #8d9294,0 1px 0 #fff"><i style="left:5px;top:6px;width:1px;height:1px;background:#fff;box-shadow:0 2px 0 #fff,0 4px 0 #fff,0 6px 0 #fff,0 8px 0 #fff"></i><i style="left:7px;top:6px;width:10px;height:1px;background:#fff;box-shadow:0 2px 0 #fff,0 4px 0 #fff,0 6px 0 #fff,0 8px 0 #fff"></i></div>
<div style="left:889px;top:11px;width:20px;height:19px;border-radius:2px;background:linear-gradient(#fff,#eeeded);box-shadow:0 0 0 1px #e2e0e0"><i style="left:4px;top:5px;width:7px;height:1px;background:#777;box-shadow:0 2px 0 #777,0 4px 0 #777,0 6px 0 #777,0 8px 0 #777"></i><i style="left:12px;top:5px;width:4px;height:1px;background:#777;box-shadow:0 2px 0 #777,0 4px 0 #777,0 6px 0 #777,0 8px 0 #777"></i></div>
<div style="left:8px;top:37px;width:902px;height:1px;background:#dddbdb"></div><div style="left:8px;top:38px;width:902px;height:1px;background:#f9f8f8"></div>
<div class="fg" style="left:8px;top:42px;width:226px">
<div class="c sel" style="left:0;width:73px"><svg style="left:30px;top:5px" width="15" height="15" viewBox="0 0 15 15"><path d="M1.500.500h6l3 3v9h-9z" fill="#fdfdfd" stroke="#c9c9c9" stroke-width="1"></path><path d="M7.500.500v3h3" fill="#e8e8e8" stroke="#c9c9c9" stroke-width="1"></path><circle cx="10.500" cy="10.500" r="4" fill="#4fb33a"></circle><path d="M10.500 8v5M8 10.500h5" stroke="#eaffdf" stroke-width="1.800"></path></svg><div class="fl" style="color:#222;text-shadow:0 1px 0 #d8dadd"><span style="display: inline-block; transform: translateX(-50%) scale(0.912, 1); position: absolute; left: 50%; transform-origin: 50% 50%;">DRAFT</span></div></div>
<div class="c" style="left:73px;width:76px"><i style="left:32px;top:6px;width:3px;height:10px;background:#e4e2e2;border:1px solid #b9b7b7"></i><i style="left:38px;top:6px;width:3px;height:10px;background:#e4e2e2;border:1px solid #b9b7b7"></i><div class="fl"><span style="display: inline-block; transform: translateX(-50%) scale(0.9428, 1); position: absolute; left: 50%; transform-origin: 50% 50%;">PROFORMA</span></div></div>
<div class="c" style="left:149px;width:75px"><span style="left: 33px; top: 4.5px; font-size: 13px; line-height: 15px; font-weight: bold; color: rgb(17, 17, 17); text-shadow: rgb(17, 17, 17) 0.4px 0px 0px; display: inline-block; transform: scale(1.0367, 1); transform-origin: 0px 50%;">$</span><div class="fl" style="left:-1px"><span style="display: inline-block; transform: translateX(-50%) scale(0.9415, 1); position: absolute; left: 50%; transform-origin: 50% 50%;">INVOICES</span></div></div>
</div>
<div class="fg" style="left:238px;top:42px;width:75px">
<div class="c" style="left:0;width:74px"><span style="left: 31px; top: 4.5px; font-size: 13px; line-height: 15px; font-weight: bold; color: rgb(17, 17, 17); text-shadow: rgb(17, 17, 17) 0.4px 0px 0px; display: inline-block; transform: scale(1.0367, 1); transform-origin: 0px 50%;">$</span><i style="left:38px;top:6px;width:2px;height:9px;background:#f01"></i><i style="left:38px;top:16px;width:2px;height:2px;background:#f01"></i><div class="fl"><span style="display: inline-block; transform: translateX(-50%) scale(0.9067, 1); position: absolute; left: 50%; transform-origin: 50% 50%;">UNPAID</span></div></div>
</div>
<span class="lbl" style="left: 319px; top: 45px; display: inline-block; transform: scale(0.9627, 1); transform-origin: 0px 50%;">Number <i>:</i></span>
<span class="lbl" style="left: 427px; top: 45px; display: inline-block; transform: scale(0.9642, 1); transform-origin: 0px 50%;">Partner <i>:</i></span>
<span class="lbl" style="left: 536px; top: 45px; display: inline-block; transform: scale(0.9856, 1); transform-origin: 0px 50%;">Source Document</span>
<span style="left:639px;top:42px;font-size:10px;line-height:11px;color:#1a6b1a">?</span><span style="left:650px;top:45px;font-size:11.500px;line-height:13px;color:#444">:</span>
<span class="lbl" style="left: 676.5px; top: 45px; display: inline-block; transform: scale(0.9087, 1); transform-origin: 0px 50%;">Total <i>:</i></span>
<div class="inp red" style="left:319px;top:62px;width:104px;height:20px"></div>
<div class="inp" style="left:427px;top:63px;width:105px;height:19px"><svg style="left:91px;top:1px" width="12" height="12" viewBox="0 0 12 12"><circle cx="4.600" cy="4.600" r="3.400" fill="#fafafa" stroke="#8f8f8f" stroke-width="1.600"></circle><path d="M7.200 7.200L10.800 10.800" stroke="#8f8f8f" stroke-width="2.200" stroke-linecap="round"></path></svg></div>
<div class="inp red" style="left:535px;top:62px;width:137px;height:20px"></div>
<div class="inp" style="left:676px;top:63px;width:107px;height:19px"></div>
<span style="left:786.500px;top:66px;font-size:12px;line-height:14px;color:#444">-</span>
<div class="inp" style="left:798px;top:63px;width:105px;height:19px"><span style="left: 3px; top: 1px; display: inline-block; transform: scale(0.8736, 1); transform-origin: 0px 50%;">600</span></div>
<span class="lbl" style="left: 10px; top: 87px; display: inline-block; transform: scale(0.9387, 1); transform-origin: 0px 50%;">Journal <i>:</i></span>
<span class="lbl" style="left: 461px; top: 87px; display: inline-block; transform: scale(1.0057, 1); transform-origin: 0px 50%;">Period</span>
<span style="left:502px;top:84px;font-size:10px;line-height:11px;color:#1a6b1a">?</span><span style="left:513px;top:87px;font-size:11.500px;line-height:13px;color:#444">:</span>
<div class="inp" style="left:10px;top:105px;width:447px;height:19px"><i class="dd" style="left:428px;top:0"></i></div>
<div class="inp" style="left:461px;top:105px;width:447px;height:19px"><svg style="left:433px;top:1px" width="12" height="12" viewBox="0 0 12 12"><circle cx="4.600" cy="4.600" r="3.400" fill="#fafafa" stroke="#8f8f8f" stroke-width="1.600"></circle><path d="M7.200 7.200L10.800 10.800" stroke="#8f8f8f" stroke-width="2.200" stroke-linecap="round"></path></svg></div>
<svg style="left:9.500px;top:134.500px" width="6" height="5" viewBox="0 0 6 5"><path d="M0 0h6L3 5z" fill="#8a8888"></path></svg>
<span class="lbl" style="left: 18px; top: 131px; color: rgb(124, 122, 122); display: inline-block; transform: scale(0.9325, 1); transform-origin: 0px 50%;">Group By...</span>
<div class="fg" style="left:18px;top:147px;width:75px">
<div class="c" style="left:0;width:74px"><svg style="left:30px;top:5px" width="16" height="16" viewBox="0 0 16 16"><circle cx="5.500" cy="4.500" r="3" fill="#b9893c"></circle><path d="M.500 12c0-3.500 2-5 5-5s5 1.500 5 5z" fill="#7a9a3a"></path><circle cx="10" cy="6.500" r="3.200" fill="#d9a24c"></circle><path d="M4.500 15c0-4 2.500-5.500 5.500-5.500s5.500 1.500 5.500 5.500z" fill="#2c62b0"></path><path d="M8.800 9.800h2.400l-1.200 2.500z" fill="#fff"></path></svg><div class="fl"><span style="display: inline-block; transform: translateX(-50%) scale(0.9167, 1); position: absolute; left: 50%; transform-origin: 50% 50%;">PARTNER</span></div></div>
</div>
<div class="fg" style="left:97px;top:147px;width:150px">
<div class="c" style="left:0;width:73px"><svg style="left:29px;top:4px" width="17" height="16" viewBox="0 0 17 16"><defs><linearGradient id="fo" x1="0" y1="0" x2="1" y2="1"><stop offset="0" stop-color="#fdc98a"></stop><stop offset="1" stop-color="#f28c1e"></stop></linearGradient></defs><path d="M1 3.500a1 1 0 0 1 1-1h4l1.500 1.500h7a1 1 0 0 1 1 1v8.500a1 1 0 0 1-1 1H2a1 1 0 0 1-1-1z" fill="#f39a32" stroke="#d06a10" stroke-width="1.200"></path><path d="M2 6.300h12.500v7.200H2z" fill="url(#fo)"></path><path d="M1.800 5.600h12.900" stroke="#fde0b4" stroke-width=".9"></path></svg><div class="fl"><span style="display: inline-block; transform: translateX(-50%) scale(0.9027, 1); position: absolute; left: 50%; transform-origin: 50% 50%;">JOURNAL</span></div></div>
<div class="c" style="left:73px;width:75px"><svg style="left:29px;top:5px" width="16" height="16" viewBox="0 0 16 16"><rect x=".500" y=".500" width="5" height="5" fill="#e8392b" stroke="#7a1a12" stroke-width="1"></rect><rect x="8.500" y="10.500" width="5" height="5" fill="#7d9cc8" stroke="#1f2f4a" stroke-width="1"></rect><path d="M7.500 3h3.500v4" fill="none" stroke="#111" stroke-width="1.400"></path><path d="M8.500 6.500h5L11 9.500z" fill="#111"></path></svg><div class="fl"><span style="display: inline-block; transform: translateX(-50%) scale(0.9292, 1); position: absolute; left: 50%; transform-origin: 50% 50%;">STATE</span></div></div>
</div>
<div class="fg" style="left:251px;top:147px;width:238px">
<div class="c" style="left:0;width:73px"><svg class="cal" style="left:29px;top:5px" width="16" height="16" viewBox="0 0 16 16"><rect x=".500" y=".500" width="15" height="15" fill="#f4f4f0" stroke="#a9a9a9" stroke-width="1"></rect><rect x="0" y="0" width="16" height="3.500" fill="#3f6fc0"></rect><path d="M1 6.500h14M1 9.500h14M1 12.500h14M4.500 4v11.500M8 4v11.500M11.500 4v11.500" stroke="#c4c8c0" stroke-width="1"></path></svg><div class="fl"><span style="display: inline-block; transform: translateX(-50%) scale(0.8889, 1); position: absolute; left: 50%; transform-origin: 50% 50%;">PERIOD</span></div></div>
<div class="c" style="left:73px;width:88px"><svg class="cal" style="left:36px;top:5px" width="16" height="16" viewBox="0 0 16 16"><rect x=".500" y=".500" width="15" height="15" fill="#f4f4f0" stroke="#a9a9a9" stroke-width="1"></rect><rect x="0" y="0" width="16" height="3.500" fill="#3f6fc0"></rect><path d="M1 6.500h14M1 9.500h14M1 12.500h14M4.500 4v11.500M8 4v11.500M11.500 4v11.500" stroke="#c4c8c0" stroke-width="1"></path></svg><div class="fl"><span style="display: inline-block; transform: translateX(-50%) scale(0.9364, 1); position: absolute; left: 50%; transform-origin: 50% 50%;">INVOICE DATE</span></div></div>
<div class="c" style="left:161px;width:75px"><svg class="cal" style="left:29px;top:5px" width="16" height="16" viewBox="0 0 16 16"><rect x=".500" y=".500" width="15" height="15" fill="#f4f4f0" stroke="#a9a9a9" stroke-width="1"></rect><rect x="0" y="0" width="16" height="3.500" fill="#3f6fc0"></rect><path d="M1 6.500h14M1 9.500h14M1 12.500h14M4.500 4v11.500M8 4v11.500M11.500 4v11.500" stroke="#c4c8c0" stroke-width="1"></path></svg><div class="fl"><span style="display: inline-block; transform: translateX(-50%) scale(0.8931, 1); position: absolute; left: 50%; transform-origin: 50% 50%;">DUE DATE</span></div></div>
</div>
<div class="gbtn" style="left:18px;top:189.500px;width:34px;height:17px;line-height:15px"><span>–</span></div>
<div class="gbtn" style="left:18px;top:209.500px;width:34px;height:17px;line-height:15px"><span>–</span></div>
<span style="left: 106px; top: 191px; font-size: 12px; line-height: 14px; color: rgb(68, 68, 68); display: inline-block; transform: scale(0.9037, 1); transform-origin: 0px 50%;">Currency</span>
<span style="left: 106px; top: 211px; font-size: 12px; line-height: 14px; color: rgb(68, 68, 68); display: inline-block; transform: scale(0.8556, 1); transform-origin: 0px 50%;">Payment Term</span>
<div class="inp" style="left:279px;top:188px;width:93px;height:20px"><span style="left: 5px; top: 2px; display: inline-block; transform: scale(0.906, 1); transform-origin: 0px 50%;">contains</span><i class="dd" style="left:74px;top:1px"></i></div>
<div class="inp" style="left:279px;top:208px;width:93px;height:20px"><span style="left: 5px; top: 2px; display: inline-block; transform: scale(0.906, 1); transform-origin: 0px 50%;">contains</span><i class="dd" style="left:74px;top:1px"></i></div>
<div class="inp" style="left:532px;top:188px;width:131px;height:20px"><span style="left: 3px; top: 2px; display: inline-block; transform: scale(0.7497, 1); transform-origin: 0px 50%;">EUR</span></div>
<div class="inp" style="left:532px;top:209px;width:131px;height:19px"><span style="left: 3px; top: 1px; display: inline-block; transform: scale(0.8608, 1); transform-origin: 0px 50%;">30</span><i style="left:15.500px;top:2px;width:1px;height:13px;background:#000"></i></div>
<span style="left: 24px; top: 233px; font-size: 12px; line-height: 14px; color: rgb(68, 68, 68); display: inline-block; transform: scale(0.8895, 1); transform-origin: 0px 50%;">And</span>
<div class="inp" style="left:47px;top:230px;width:226px;height:20px"><i class="dd" style="left:206px;top:1px"></i></div>
<span style="left: 351px; top: 233px; font-size: 12px; line-height: 14px; color: rgb(68, 68, 68); display: inline-block; transform: scale(0.8244, 1); transform-origin: 0px 50%;">Or</span>
<div class="inp" style="left:366px;top:230px;width:226px;height:20px"><i class="dd" style="left:206px;top:1px"></i></div><div style="left:18px;top:252px;width:578px;height:1px;background:#f8f7f7"></div>
<div class="gbtn" style="left:8px;top:257px;width:66px;height:18px;line-height:15px;font-size:11.500px"><span style="display: inline-block; transform: translateX(-50%) scale(0.9776, 1); position: absolute; left: 50%; transform-origin: 50% 50%;">Search</span></div>
<div class="gbtn" style="left:77px;top:257px;width:57px;height:18px;line-height:15px;font-size:11.500px"><span style="display: inline-block; transform: translateX(-50%) scale(0.9729, 1); position: absolute; left: 50%; transform-origin: 50% 50%;">Clear</span></div>
<div class="inp" style="left:820px;top:256px;width:90px;height:20px"><span style="left: 4.5px; top: 2px; color: rgb(34, 34, 34); display: inline-block; transform: scale(0.9218, 1); transform-origin: 0px 50%;">-- Filters --</span><i class="dd" style="left:71px;top:1px"></i></div>
<div id="list">
<span style="left: 4.5px; top: 4px; font-size: 13px; line-height: 15px; color: rgb(0, 0, 0); text-shadow: rgb(0, 0, 0) 0.4px 0px 0px; display: inline-block; transform: scale(0.9465, 1); transform-origin: 0px 50%;">Invoice</span>
<div class="gbtn" style="left:60px;top:2px;width:52px;height:18px;line-height:15px;font-size:11.500px"><span style="display: inline-block; transform: translateX(-50%) scale(1.0145, 1); position: absolute; left: 50%; transform-origin: 50% 50%;">New</span></div>
<div class="pgr" style="left:0;top:0">
<svg style="left:785.700px;top:6px" width="11" height="10" viewBox="0 0 11 10"><path d="M5.500 0v10L0 5zM10.500 0v10L5 5z" fill="#c9c7c7"></path></svg>
<svg style="left:804px;top:6px" width="6" height="10" viewBox="0 0 6 10"><path d="M6 0v10L0 5z" fill="#c9c7c7"></path></svg>
<span class="pg" style="left: 817.5px; top: 5px; display: inline-block; transform: scale(0.9972, 1); transform-origin: 0px 50%;">0 - 0 of 0</span>
<svg style="left:871px;top:6px" width="6" height="10" viewBox="0 0 6 10"><path d="M0 0v10L6 5z" fill="#c9c7c7"></path></svg>
<svg style="left:884.500px;top:6px" width="11" height="10" viewBox="0 0 11 10"><path d="M0 0v10L5.500 5zM5 0v10L10.500 5z" fill="#c9c7c7"></path></svg>
</div>
<div id="lhead">
<i style="left:4px;top:1px;width:12px;height:12px;background:#fff;border:1px solid;border-color:#808080 #e0e0e0 #e0e0e0 #808080;box-shadow:inset 1px 1px 0 #404040"></i>
<span style="left: 40.5px; display: inline-block; transform: scale(0.9065, 1); transform-origin: 0px 50%;">DOCUMENT DATE</span>
<span style="left: 146.5px; display: inline-block; transform: scale(0.9041, 1); transform-origin: 0px 50%;">POSTING DATE</span>
<span style="left: 238.5px; display: inline-block; transform: scale(0.9354, 1); transform-origin: 0px 50%;">NUMBER</span>
<span style="left: 297.5px; display: inline-block; transform: scale(0.9365, 1); transform-origin: 0px 50%;">SUPPLIER</span>
<span style="left: 364px; display: inline-block; transform: scale(0.9154, 1); transform-origin: 0px 50%;">DESCRIPTION</span>
<span style="left: 451.5px; display: inline-block; transform: scale(0.8933, 1); transform-origin: 0px 50%;">DUE DATE</span>
<span style="left: 516.7px; display: inline-block; transform: scale(0.9285, 1); transform-origin: 0px 50%;">SOURCE DOCUMENT</span>
<span style="left: 642px; display: inline-block; transform: scale(0.9129, 1); transform-origin: 0px 50%;">CURRENCY</span>
<span style="left: 723px; display: inline-block; transform: scale(0.9273, 1); transform-origin: 0px 50%;">RESIDUAL</span>
<span style="left: 787px; display: inline-block; transform: scale(0.8593, 1); transform-origin: 0px 50%;">TOTAL</span>
<span style="left: 825.5px; display: inline-block; transform: scale(0.8278, 1); transform-origin: 0px 50%;">STATE</span>
</div>
<i class="row" style="top:63px"></i><i class="row" style="top:82px"></i><i class="row" style="top:101px"></i><i class="row" style="top:120px"></i><i class="row" style="top:139px"></i>
<div class="pgr" style="left:0;top:142px">
<svg style="left:785.700px;top:6px" width="11" height="10" viewBox="0 0 11 10"><path d="M5.500 0v10L0 5zM10.500 0v10L5 5z" fill="#c9c7c7"></path></svg>
<svg style="left:804px;top:6px" width="6" height="10" viewBox="0 0 6 10"><path d="M6 0v10L0 5z" fill="#c9c7c7"></path></svg>
<span class="pg" style="left: 817.5px; top: 5px; display: inline-block; transform: scale(0.9972, 1); transform-origin: 0px 50%;">0 - 0 of 0</span>
<svg style="left:871px;top:6px" width="6" height="10" viewBox="0 0 6 10"><path d="M0 0v10L6 5z" fill="#c9c7c7"></path></svg>
<svg style="left:884.500px;top:6px" width="11" height="10" viewBox="0 0 11 10"><path d="M0 0v10L5.500 5zM5 0v10L10.500 5z" fill="#c9c7c7"></path></svg>
</div>
</div>

</div>
<div id="rside" class="abs">
<div class="sh" style="top:0"><span style="display: inline-block; transform: scale(0.9669, 1); transform-origin: 0px 50%;">Reports</span></div>
<div style="left:158px;top:0;width:22px;height:23px;border-left:1px solid #cfcdcd;border-bottom:1px solid #cfcdcd;background:linear-gradient(#fff,#f2f1f1)"><span style="left:7px;top:1px;font-size:14px;line-height:16px;color:#8a8888;font-weight:bold">»</span></div>
<svg class="pi" style="left:11px;top:30px" width="15" height="15" viewBox="0 0 15 15"><rect x="3" y=".500" width="9" height="7" fill="#fff" stroke="#777" stroke-width="1"></rect><path d="M7.500 1.600v5M5 2.700l5 3M10 2.700l-5 3" stroke="#666" stroke-width="1"></path><rect x=".500" y="7.500" width="14" height="7" rx="1" fill="#e4e4e4" stroke="#777" stroke-width="1"></rect><rect x="2.500" y="10.500" width="10" height="1.600" fill="#999"></rect></svg>
<span class="sl" style="left: 29px; top: 34px; display: inline-block; transform: scale(0.9318, 1); transform-origin: 0px 50%;">Open Invoices</span>
<svg class="pi" style="left:11px;top:54px" width="15" height="15" viewBox="0 0 15 15"><rect x="3" y=".500" width="9" height="7" fill="#fff" stroke="#777" stroke-width="1"></rect><path d="M7.500 1.600v5M5 2.700l5 3M10 2.700l-5 3" stroke="#666" stroke-width="1"></path><rect x=".500" y="7.500" width="14" height="7" rx="1" fill="#e4e4e4" stroke="#777" stroke-width="1"></rect><rect x="2.500" y="10.500" width="10" height="1.600" fill="#999"></rect></svg>
<span class="sl" style="left: 29px; top: 58px; display: inline-block; transform: scale(0.9228, 1); transform-origin: 0px 50%;">Print report</span>
<div class="sh" style="top:78px"><span style="display: inline-block; transform: scale(0.9649, 1); transform-origin: 0px 50%;">Actions</span></div>
<span class="sl" style="top: 107px; display: inline-block; transform: scale(0.9361, 1); transform-origin: 0px 50%;">Confirm Draft Invoices</span>
<div class="sh" style="top:127px"><span style="display: inline-block; transform: scale(0.9715, 1); transform-origin: 0px 50%;">Links</span></div>
<span class="sl" style="top: 156px; display: inline-block; transform: scale(0.9162, 1); transform-origin: 0px 50%;">Payment Lines</span>
<span class="sl" style="top: 175px; display: inline-block; transform: scale(0.96, 1); transform-origin: 0px 50%;">Track changes</span>
<div class="sh" style="top:195px"><span style="display: inline-block; transform: scale(0.9888, 1); transform-origin: 0px 50%;">Customize</span></div>
<span class="sl" style="top: 224px; display: inline-block; transform: scale(0.9703, 1); transform-origin: 0px 50%;">Manage Views</span>
<span class="sl" style="top: 243px; display: inline-block; transform: scale(0.9255, 1); transform-origin: 0px 50%;">Customize Object</span>
<div class="sh" style="top:263px"><span style="display: inline-block; transform: scale(0.9955, 1); transform-origin: 0px 50%;">Other Options</span></div>
<span class="sl" style="top: 292px; display: inline-block; transform: scale(0.8897, 1); transform-origin: 0px 50%;">Import</span>
<span class="sl" style="top: 311px; display: inline-block; transform: scale(0.9323, 1); transform-origin: 0px 50%;">Export</span>
</div>
<div id="foot" class="abs">
<span style="left: 19.5px; display: inline-block; transform: scale(0.9992, 1); transform-origin: 0px 50%;">socket://admin@localhost:8070</span>
<span style="left: 186.7px; display: inline-block; transform: scale(0.9485, 1); transform-origin: 0px 50%;">en</span>
<span style="left: 593px; display: inline-block; transform: scale(0.9922, 1); transform-origin: 0px 50%;">Powered by <span class="s" style="color:#333">openerp.com</span></span>
</div>
<div style="left:0;top:643px;width:1280px;height:1px;background:#fff"></div>
<div style="left:0;top:644px;width:1280px;height:1px;background:#c6c6c6"></div>
<div style="left:0;top:645px;width:1280px;height:1px;background:#fff"></div>

</div>


</body></html>
